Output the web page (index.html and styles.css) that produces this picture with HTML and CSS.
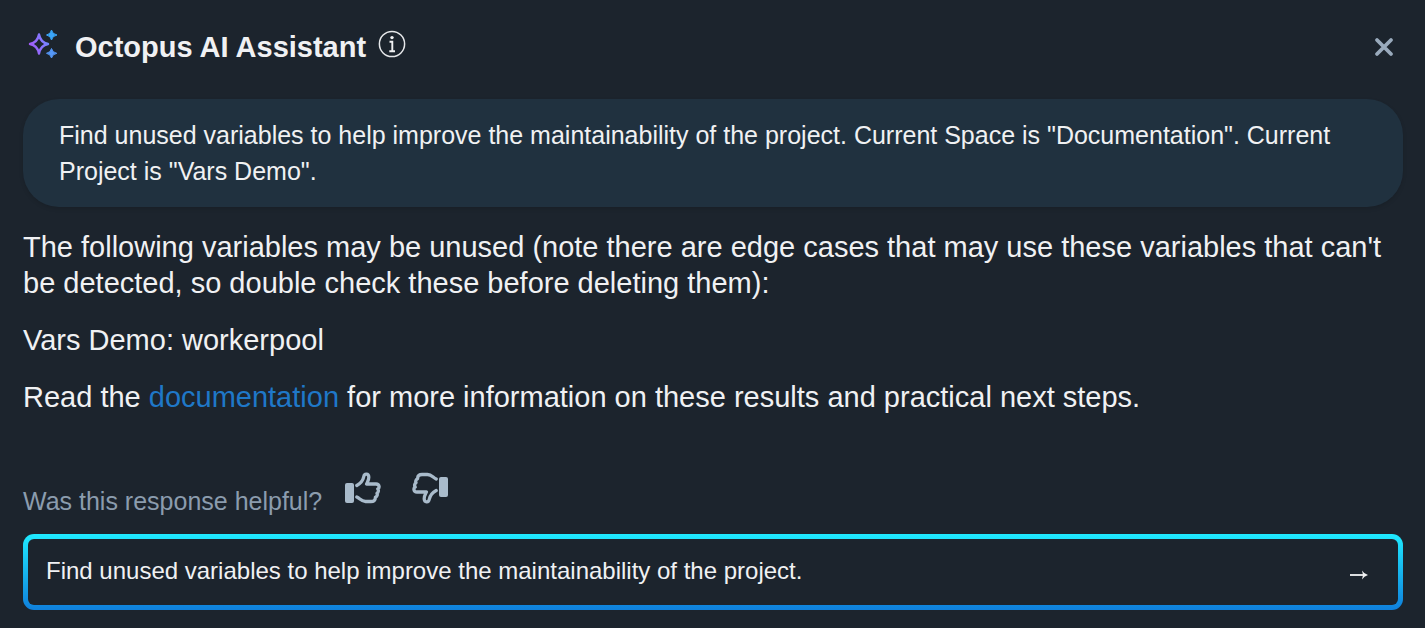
FILE: index.html
```html
<!DOCTYPE html>
<html lang="en">
<head>
<meta charset="utf-8">
<meta name="viewport" content="width=device-width, initial-scale=1">
<title>Octopus AI Assistant</title>
<link rel="stylesheet" href="styles.css">
</head>
<body>
<main class="assistant">
  <header class="header">
    <svg class="sparkles" viewBox="0 0 32 32" aria-hidden="true">
      <defs>
        <linearGradient id="spark" gradientUnits="userSpaceOnUse" x1="1" y1="20" x2="31" y2="10">
          <stop offset="0" stop-color="#a855f7"/>
          <stop offset=".55" stop-color="#7f7cff"/>
          <stop offset="1" stop-color="#38a5f8"/>
        </linearGradient>
      </defs>
      <path d="M12 6.500Q13.500 14.500 21 16Q13.500 17.500 12 25.500Q10.500 17.500 3 16Q10.500 14.500 12 6.500Z" fill="none" stroke="url(#spark)" stroke-width="2.400" stroke-linejoin="round"/>
      <path d="M24.500 2Q25.300 6.200 30 7Q25.300 7.800 24.500 12Q23.700 7.800 19.500 7Q23.700 6.200 24.500 2Z" fill="#3aa5f8" stroke="#3aa5f8" stroke-linejoin="round"/>
      <path d="M24.500 20.500Q25.300 24.500 29.800 25.300Q25.300 26.100 24.500 30Q23.700 26.100 19.500 25.300Q23.700 24.500 24.500 20.500Z" fill="#5598f8" stroke="#5598f8" stroke-linejoin="round"/>
    </svg>
    <h1 class="title">Octopus AI Assistant</h1>
    <button class="icon-button info" type="button" aria-label="About the assistant">
      <svg class="info-icon" viewBox="0 0 28 28" aria-hidden="true">
        <circle cx="14" cy="14" r="12.600" fill="none" stroke="#e6e8ea" stroke-width="1.500"/>
        <circle cx="14" cy="7.600" r="1.700" fill="#f0f1f2"/>
        <path d="M11.500 11.800H14.300V21M11.300 21.200H17" fill="none" stroke="#f0f1f2" stroke-width="1.900"/>
      </svg>
    </button>
    <button class="icon-button close" type="button" aria-label="Close">
      <svg class="close-icon" viewBox="0 0 20 20" aria-hidden="true">
        <path d="M3 3 17 17M17 3 3 17" fill="none" stroke="#99aabc" stroke-width="3.800" stroke-linecap="round"/>
      </svg>
    </button>
  </header>

  <p class="prompt">Find unused variables to help improve the maintainability of the project. Current Space is "Documentation". Current Project is "Vars Demo".</p>

  <section class="response">
    <p class="paragraph">The following variables may be unused (note there are edge cases that may use these variables that can't be detected, so double check these before deleting them):</p>
    <p class="paragraph">Vars Demo: workerpool</p>
    <p class="paragraph">Read the <a class="link" href="#documentation">documentation</a> for more information on these results and practical next steps.</p>
  </section>

  <div class="feedback">
    <span class="question">Was this response helpful?</span>
    <button class="icon-button" type="button" aria-label="Helpful">
      <svg class="thumb" viewBox="0 0 36 32" aria-hidden="true">
        <rect x="0" y="11" width="9" height="20" rx="2" fill="#a9bbcb"/>
        <path d="M11.800 13.500C15.500 11.500 18 8.500 18.800 4.500C19.400 1.300 23.600 1.400 23.800 5C23.900 8 22.800 9.500 21.600 12H31C34.700 12.200 34.700 16 32.800 17C34 18.500 33.200 20.500 32 21.300C32.800 23 31.800 24.600 30.400 25.300C30.500 28.500 28.500 29.500 26 29.500H20.500C16.500 29.500 15 26.500 11.800 25" fill="none" stroke="#a9bbcb" stroke-width="3.300" stroke-linejoin="round" stroke-linecap="round"/>
      </svg>
    </button>
    <button class="icon-button" type="button" aria-label="Not helpful">
      <svg class="thumb thumb-down" viewBox="0 0 36 32" aria-hidden="true">
        <rect x="0" y="7" width="9" height="20" rx="2" fill="#a9bbcb"/>
        <path d="M11.800 13.500C15.500 11.500 18 8.500 18.800 4.500C19.400 1.300 23.600 1.400 23.800 5C23.900 8 22.800 9.500 21.600 12H31C34.700 12.200 34.700 16 32.800 17C34 18.500 33.200 20.500 32 21.300C32.800 23 31.800 24.600 30.400 25.300C30.500 28.500 28.500 29.500 26 29.500H20.500C16.500 29.500 15 26.500 11.800 25" fill="none" stroke="#a9bbcb" stroke-width="3.300" stroke-linejoin="round" stroke-linecap="round"/>
      </svg>
    </button>
  </div>

  <form class="composer">
    <input class="message" type="text" aria-label="Message" value="Find unused variables to help improve the maintainability of the project.">
    <button class="icon-button send" type="button" aria-label="Send">
      <svg class="send-icon" viewBox="0 0 20 12" aria-hidden="true">
        <path d="M1 6H17" stroke="#f2f3f4" stroke-width="1.800"/>
        <path d="M13 1.500Q15 5 19 6Q15 7 13 10.500L14 6Z" fill="#f2f3f4"/>
      </svg>
    </button>
  </form>
</main>
</body>
</html>
```
FILE: styles.css
```css
* {
  box-sizing: border-box;
}

body {
  margin: 0;
  background: #1c242d;
  color: #f0f1f3;
  font-family: "Liberation Sans", Arial, sans-serif;
}

.assistant {
  padding: 29px 22px 18px 23px;
}

.header {
  display: flex;
  align-items: center;
  height: 36px;
  margin-bottom: 34px;
  padding: 0 9px 0 4px;
}

.sparkles {
  width: 32px;
  height: 32px;
  margin-bottom: 6px;
}

.title {
  margin: 0 12px 0 16px;
  font-size: 29px;
  line-height: 36px;
}

.icon-button {
  display: flex;
  padding: 0;
  border: 0;
  background: none;
  color: inherit;
  cursor: pointer;
}

.info {
  margin-bottom: 6px;
}

.info-icon {
  width: 28px;
  height: 28px;
}

.close {
  margin-left: auto;
}

.close-icon {
  width: 20px;
  height: 20px;
}

.prompt {
  margin: 0 0 22px;
  padding: 18px 36px;
  border-radius: 36px;
  background: #20313f;
  box-shadow: 0 2px 4px rgb(0 0 0 / 12%);
  font-size: 25px;
  line-height: 36px;
}

.response {
  display: grid;
  gap: 21px;
  font-size: 29px;
  line-height: 36px;
}

.paragraph {
  margin: 0;
}

.link {
  color: #1f78c8;
  text-decoration: none;
}

.feedback {
  display: flex;
  align-items: flex-start;
  gap: 31px;
  margin: 57px 0 16px;
}

.question {
  margin: 12px -8px 0 0;
  color: #8b9cae;
  font-size: 25px;
  line-height: 34px;
}

.thumb {
  width: 36px;
  height: 32px;
}

.thumb-down {
  transform: rotate(180deg);
}

.composer {
  display: flex;
  align-items: center;
  height: 76px;
  padding: 0 29px 0 18px;
  border: 5px solid transparent;
  border-radius: 11px;
  background:
    linear-gradient(#1c242d, #1c242d) padding-box,
    linear-gradient(#1feaff, #0f80dc) border-box;
}

.message {
  flex: 1;
  min-width: 0;
  padding: 0 0 2px;
  border: 0;
  outline: 0;
  background: none;
  color: inherit;
  font: 24px/32px "Liberation Sans", Arial, sans-serif;
}

.send {
  padding-top: 6px;
}

.send-icon {
  width: 20px;
  height: 12px;
}
```
